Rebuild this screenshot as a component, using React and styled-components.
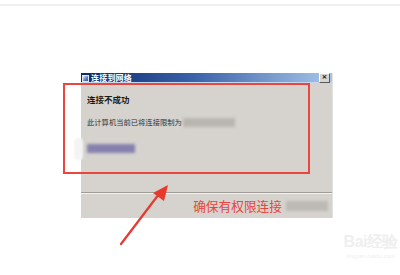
import React from 'react';
import styled, { createGlobalStyle } from 'styled-components';

const GlobalStyle = createGlobalStyle`
  html, body {
    margin: 0;
    padding: 0;
    background: #fff;
    font-family: "Noto Sans CJK SC", "Noto Sans", sans-serif;
  }
`;

const Page = styled.div`
  position: relative;
  width: 400px;
  height: 275px;
  overflow: hidden;
  background: #fff;
`;

const TopRule = styled.div`
  height: 4px;
  border-bottom: 2px solid #f0f0f0;
`;

const Window = styled.div`
  margin: 67px 0 0 81px;
  width: 252px;
  height: 145px;
  background: #d6d3ce;
  display: flex;
  flex-direction: column;
  border-right: 1px solid #e4e2de;
  box-sizing: border-box;
`;

const TitleBar = styled.div`
  height: 10px;
  display: flex;
  align-items: center;
  padding: 0 1px;
  background: linear-gradient(90deg, #0b2a6e 0%, #3a62a8 45%, #a8c6ea 100%);
  box-shadow: inset 0 -1px 0 #c8d6ec;
`;

const AppIcon = styled.div`
  width: 7px;
  height: 7px;
  margin-right: 2px;
  background: linear-gradient(135deg, #e8eef8 0%, #5a7fbf 60%, #2c4f8c 100%);
  border: 1px solid #dfe6f2;
  box-sizing: border-box;
`;

const Title = styled.span`
  flex: 1;
  color: #fff;
  font-size: 8px;
  font-weight: 700;
  line-height: 10px;
  letter-spacing: 0.2px;
`;

const CloseBtn = styled.div`
  width: 9px;
  height: 8px;
  background: #d8d5cf;
  border: 1px solid #fff;
  border-right-color: #5a5a5a;
  border-bottom-color: #5a5a5a;
  font-size: 7px;
  line-height: 7px;
  text-align: center;
  color: #111;
  font-weight: 700;
  font-family: "DejaVu Sans", sans-serif;
  box-sizing: content-box;
  margin-right: 1px;
`;

const Content = styled.div`
  flex: 1;
  padding: 11px 0 0 6px;
  display: flex;
  flex-direction: column;
  border-bottom: 1px solid #a09d98;
  box-shadow: 0 1px 0 #f4f2ee;
`;

const Heading = styled.div`
  font-size: 8.5px;
  font-weight: 700;
  color: #1a1a1a;
  line-height: 10px;
`;

const Line = styled.div`
  margin-top: 13px;
  display: flex;
  align-items: center;
  font-size: 7.3px;
  color: #333;
  line-height: 10px;
`;

const Blur = styled.span`
  display: inline-block;
  width: ${p => p.w}px;
  height: ${p => p.h}px;
  background: ${p => p.c};
  filter: blur(1.5px);
  margin-left: ${p => p.ml || 0}px;
`;

const LinkRow = styled.div`
  margin-top: 17px;
  display: flex;
`;

const Footer = styled.div`
  height: 25px;
  display: flex;
  align-items: center;
  justify-content: flex-end;
  padding-right: 4px;
  gap: 4px;
`;

const Note = styled.span`
  color: #e8453c;
  font-size: 12.7px;
  line-height: 16px;
  margin-top: 1px;
`;

const Frame = styled.div`
  position: absolute;
  left: 63px;
  top: 83px;
  width: 247px;
  height: 91px;
  border: 2px solid #e9473d;
  box-sizing: border-box;
`;

const Smudge = styled.div`
  position: absolute;
  left: 74px;
  top: 138px;
  width: 9px;
  height: 22px;
  background: #f4f4f4;
  border-radius: 4px;
  filter: blur(1px);
`;

const Arrow = styled.svg`
  position: absolute;
  left: 115px;
  top: 180px;
`;

const Watermark = styled.div`
  position: absolute;
  right: 2px;
  top: 234px;
  color: #efefef;
  font-family: "Liberation Sans", sans-serif;
  text-align: center;
  line-height: 1;
`;

const WmBig = styled.div`
  font-size: 16px;
  font-weight: 700;
  letter-spacing: -0.5px;
`;

const WmSmall = styled.div`
  font-size: 6px;
  margin-top: 3px;
`;

export default function App() {
  return (
    <Page>
      <GlobalStyle />
      <TopRule />
      <Window>
        <TitleBar>
          <AppIcon />
          <Title>连接到网络</Title>
          <CloseBtn>×</CloseBtn>
        </TitleBar>
        <Content>
          <Heading>连接不成功</Heading>
          <Line>
            此计算机当前已将连接限制为
            <Blur w={52} h={9} c="#b9b6b1" ml={1} />
          </Line>
          <LinkRow>
            <Blur w={48} h={9} c="#8581ad" />
          </LinkRow>
        </Content>
        <Footer>
          <Note>确保有权限连接</Note>
          <Blur w={42} h={10} c="#bdbab5" />
        </Footer>
      </Window>
      <Frame />
      <Smudge />
      <Arrow width="60" height="70" viewBox="0 0 60 70">
        <path d="M6 64 L44 14" stroke="#e8392e" strokeWidth="2.2" strokeLinecap="round" />
        <path d="M53 5 L38 13 L49 21 Z" fill="#e8392e" />
      </Arrow>
      <Watermark>
        <WmBig>Bai经验</WmBig>
        <WmSmall>jingyan.baidu.com</WmSmall>
      </Watermark>
    </Page>
  );
}
